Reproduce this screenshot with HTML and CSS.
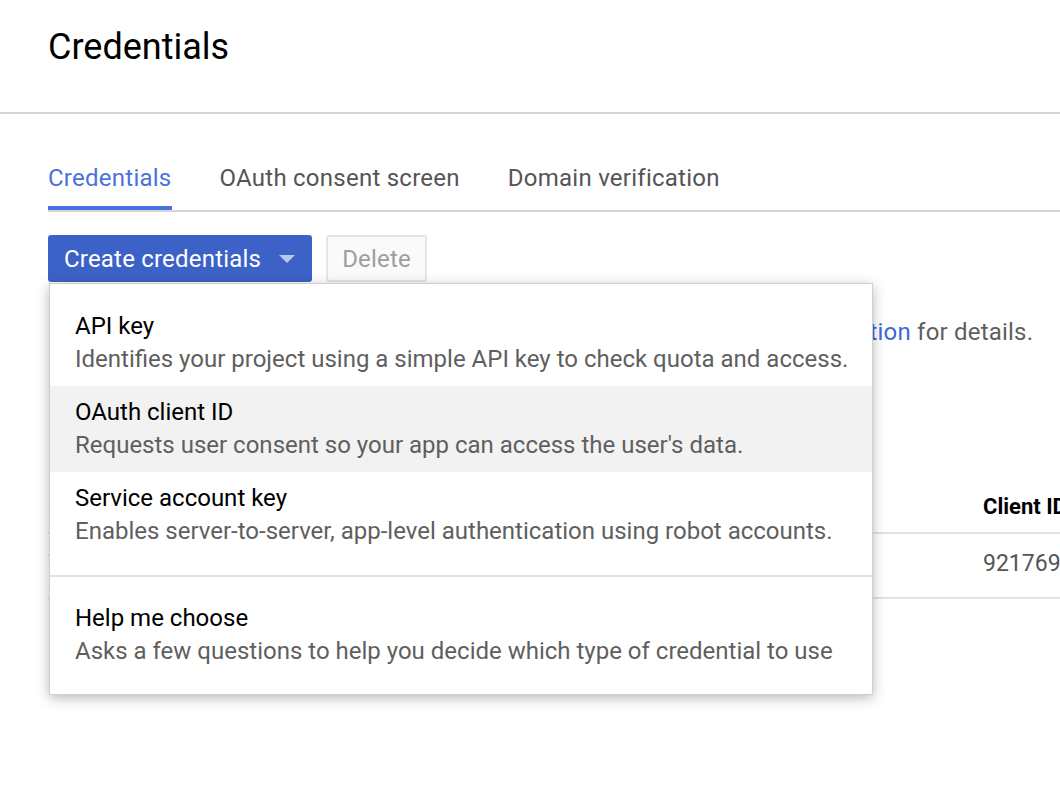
FILE: index.html
```html
<!DOCTYPE html>
<html lang="en">
<head>
<meta charset="utf-8">
<title>Credentials</title>
<link rel="stylesheet" href="styles.css">
</head>
<body>
<header class="page-header">
  <h1 class="page-title">Credentials</h1>
</header>
<main class="content">
  <nav class="tabs">
    <span class="tab tab-active">Credentials</span>
    <span class="tab">OAuth consent screen</span>
    <span class="tab">Domain verification</span>
  </nav>
  <div class="toolbar">
    <button class="btn btn-primary">Create credentials <span class="caret"></span></button>
    <button class="btn btn-disabled">Delete</button>
    <div class="menu">
      <div class="menu-item">
        <div class="menu-title">API key</div>
        <div class="menu-desc">Identifies your project using a simple API key to check quota and access.</div>
      </div>
      <div class="menu-item menu-item-hover">
        <div class="menu-title">OAuth client ID</div>
        <div class="menu-desc">Requests user consent so your app can access the user's data.</div>
      </div>
      <div class="menu-item">
        <div class="menu-title">Service account key</div>
        <div class="menu-desc">Enables server-to-server, app-level authentication using robot accounts.</div>
      </div>
      <div class="menu-divider"></div>
      <div class="menu-item">
        <div class="menu-title">Help me choose</div>
        <div class="menu-desc">Asks a few questions to help you decide which type of credential to use</div>
      </div>
    </div>
  </div>
  <p class="intro">Create credentials to access your enabled APIs. Refer to the API <a class="link" href="#">documentation</a> for details.</p>
  <div class="table">
    <div class="row row-head">
      <div class="cell">Name</div>
      <div class="cell">Creation date</div>
      <div class="cell">Type</div>
      <div class="cell">Client ID</div>
    </div>
    <div class="row">
      <div class="cell">Web client 1</div>
      <div class="cell">Mar 2, 2017</div>
      <div class="cell">Web</div>
      <div class="cell">921769463285-7k2q.apps.googleusercontent.com</div>
    </div>
  </div>
</main>
</body>
</html>
```

FILE: styles.css
```css
* { box-sizing: border-box; }
html, body { margin: 0; padding: 0; }
body {
  font-family: Roboto, "Noto Sans", "Liberation Sans", sans-serif;
  background: #fff;
  color: #212121;
  width: 1060px;
  height: 806px;
  overflow: hidden;
}
.page-header {
  height: 114px;
  border-bottom: 2px solid #d6d6d6;
  padding-left: 48px;
}
.page-title {
  margin: 0;
  padding-top: 26px;
  font-size: 36px;
  font-weight: 400;
  line-height: 42px;
  color: #000;
}
.content {
  padding-left: 48px;
}
.tabs {
  margin-top: 50px;
  display: flex;
  gap: 48px;
  border-bottom: 2px solid #d6d6d6;
}
.tab {
  font-size: 24px;
  line-height: 28px;
  letter-spacing: 0.25px;
  padding-bottom: 14px;
  border-bottom: 4px solid transparent;
  color: #555;
  white-space: nowrap;
}
.tab-active {
  color: #4a72dc;
  border-bottom-color: #4a72dc;
}
.toolbar {
  position: relative;
  margin-top: 23px;
  display: flex;
  gap: 14px;
}
.btn {
  font-family: inherit;
  font-size: 24px;
  letter-spacing: 0.2px;
  height: 47px;
  border-radius: 3px;
  display: flex;
  align-items: center;
  cursor: pointer;
}
.btn-primary {
  background: #3c62c8;
  color: #fff;
  border: none;
  padding: 0 17px 0 16px;
  gap: 18px;
}
.caret {
  width: 0;
  height: 0;
  border-left: 8px solid transparent;
  border-right: 8px solid transparent;
  border-top: 8px solid rgba(255,255,255,0.65);
}
.btn-disabled {
  background: #fafafa;
  color: #9e9e9e;
  border: 2px solid #e6e6e6;
  padding: 0 14px;
}
.menu {
  position: absolute;
  top: 48px;
  left: 1px;
  width: 824px;
  background: #fff;
  border: 1px solid #cfcfcf;
  box-shadow: 0 3px 12px rgba(0,0,0,0.28);
  padding: 16px 0;
  z-index: 10;
}
.menu-item {
  padding: 12px 25px 8px;
}
.menu-item-hover {
  background: #f2f2f2;
}
.menu-title {
  font-size: 24px;
  line-height: 28px;
  color: #000;
}
.menu-desc {
  font-size: 24px;
  line-height: 38px;
  color: #5f5f5f;
  white-space: nowrap;
}
.menu-divider {
  height: 2px;
  background: #e3e3e3;
  margin: 17px 0 15px;
}
.intro {
  margin: 34px 0 0;
  font-size: 24px;
  line-height: 32px;
  letter-spacing: 0.2px;
  color: #5f5f5f;
  white-space: nowrap;
}
.link {
  color: #3b6ad6;
  text-decoration: none;
}
.table {
  margin-top: 133px;
}
.row {
  display: grid;
  grid-template-columns: 360px 300px 275px 1fr;
  border-bottom: 2px solid #e3e3e3;
  padding: 16px 0 19px;
  font-size: 23px;
  line-height: 28px;
  color: #555;
  white-space: nowrap;
}
.row-head {
  padding: 12px 0 11px;
  font-size: 22px;
  font-weight: 700;
  color: #000;
}
.cell { overflow: visible; }
```
